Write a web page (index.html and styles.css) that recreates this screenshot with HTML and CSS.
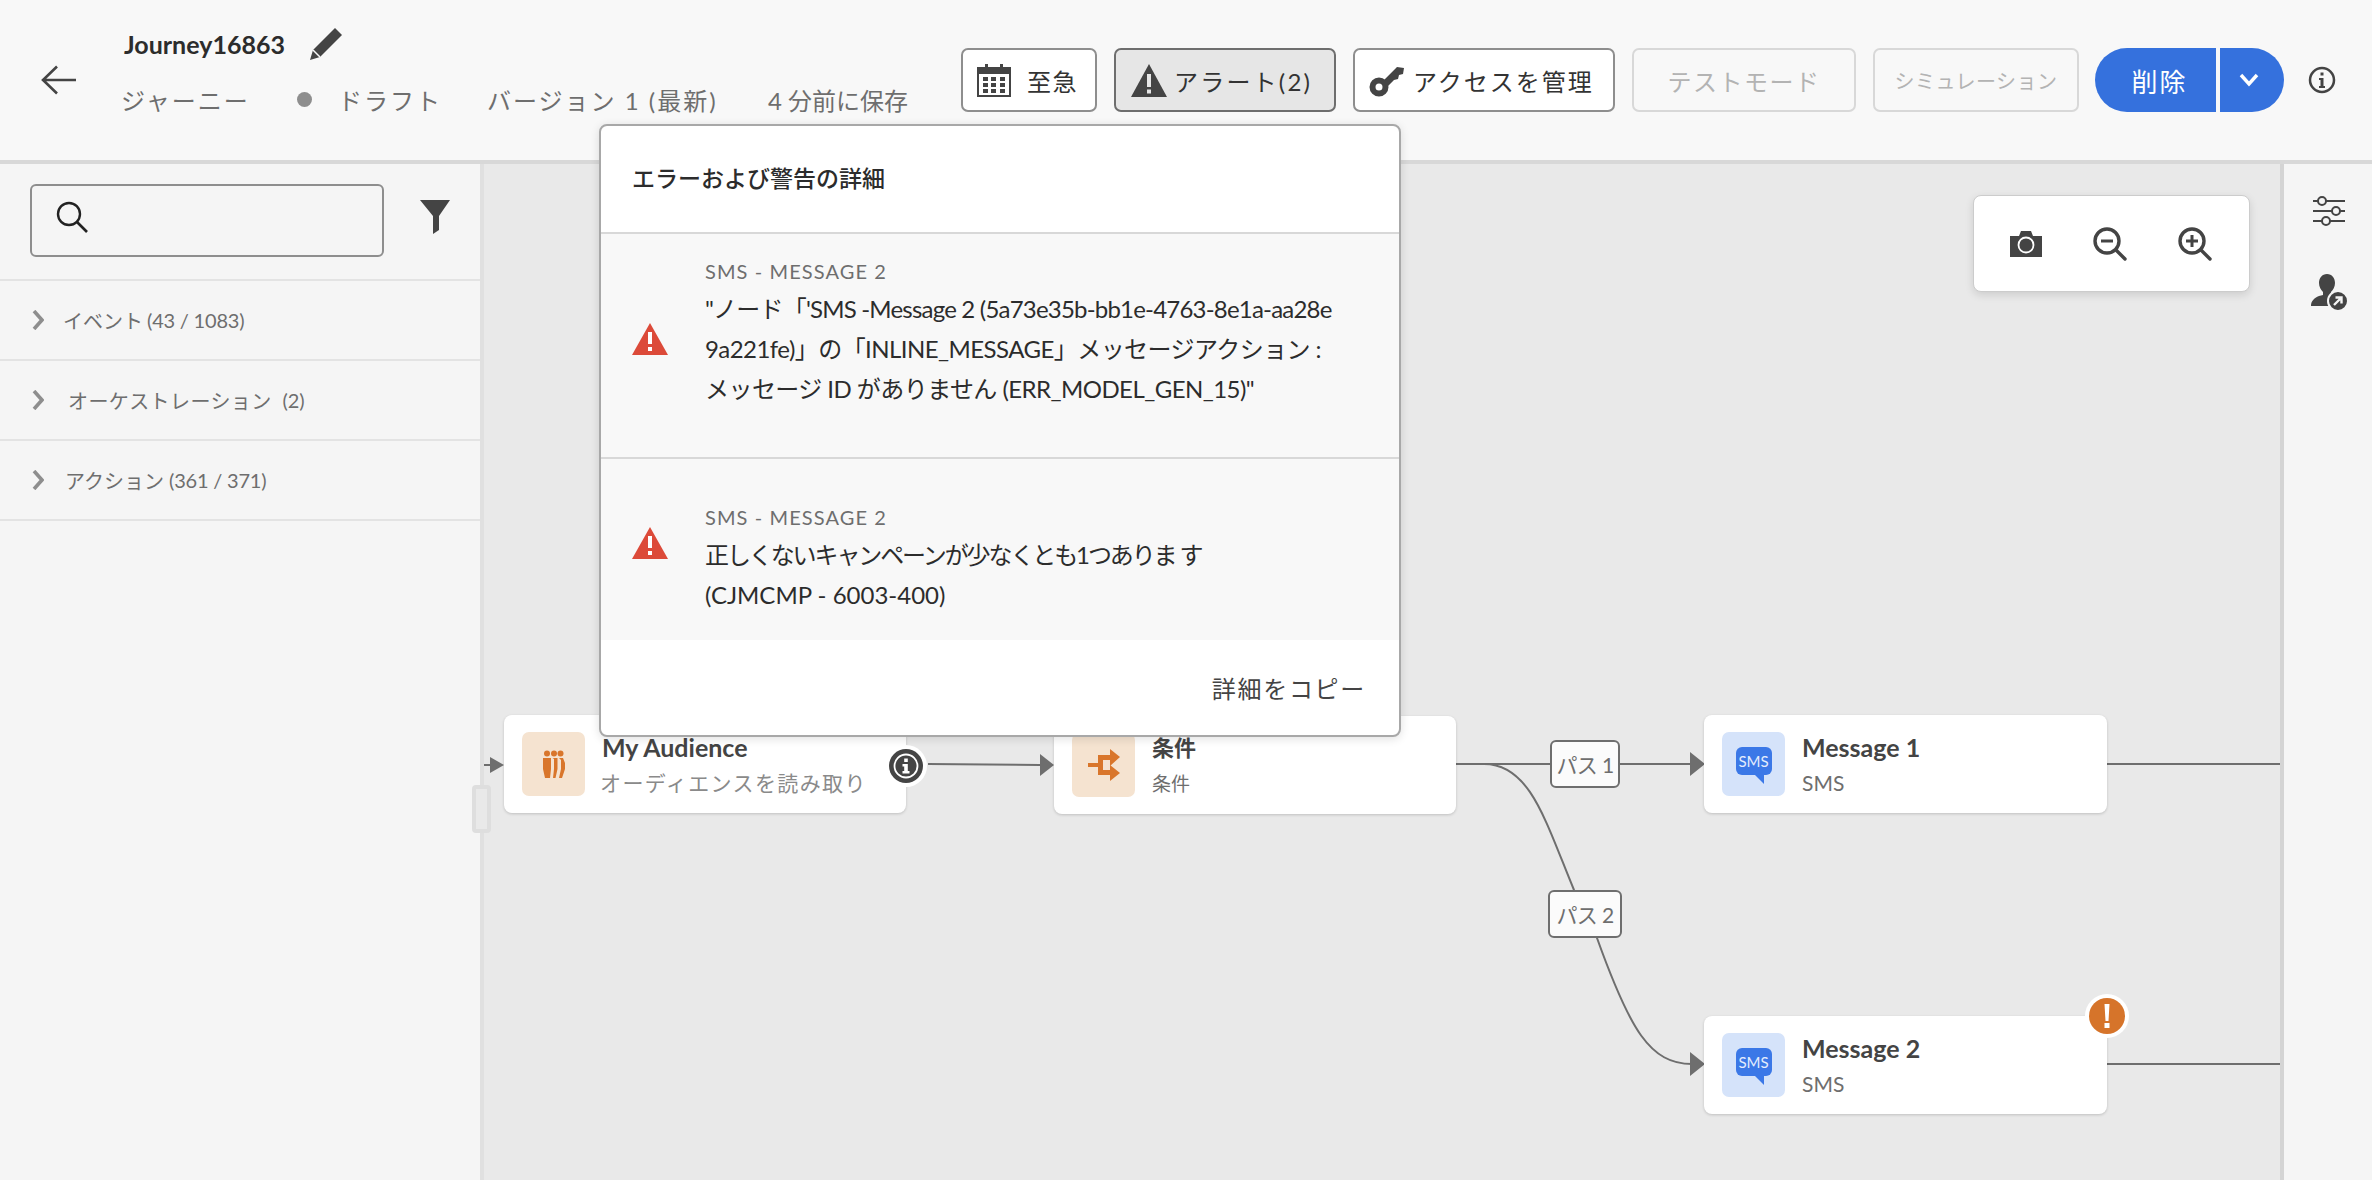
FILE: index.html
```html
<!DOCTYPE html>
<html lang="ja">
<head>
    <meta charset="UTF-8">
    <title>Journey16863</title>
    <link rel="stylesheet" href="styles.css">
</head>
<body>

<header class="topbar">
    <button class="back-button" aria-label="戻る">
        <svg width="36" height="30" viewBox="0 0 36 30"><path d="M35 15H3M16 1.500L2 15l14 13.500" fill="none" stroke="#444" stroke-width="2.600"/></svg>
    </button>
    <div class="journey-info">
        <div class="journey-title">
            <span>Journey16863</span>
            <svg width="34" height="34" viewBox="0 0 34 34"><path d="M26 1l7 7L11 30 1 33l3-10z" fill="#444"/><path d="M4 23l7 7" stroke="#f8f8f8" stroke-width="1.500"/></svg>
        </div>
        <div class="journey-meta">
            <span class="meta-type">ジャーニー</span>
            <span class="status-dot"></span>
            <span class="meta-status">ドラフト</span>
            <span class="meta-version">バージョン 1 (最新)</span>
            <span class="meta-saved">4 分前に保存</span>
        </div>
    </div>
    <div class="actions">
        <button class="btn btn-urgent">
            <svg width="34" height="34" viewBox="0 0 34 34"><path d="M1 5h32v28H1z" fill="#fff" stroke="#444" stroke-width="2"/><path d="M1 5h32v6H1zM8 1h3v6H8zM23 1h3v6h-3z" fill="#444"/><path d="M6 14h5v4H6zM14 14h5v4h-5zM23 14h5v4h-5zM6 20h5v4H6zM14 20h5v4h-5zM23 20h5v4h-5zM6 26h5v4H6zM14 26h5v4h-5zM23 26h5v4h-5z" fill="#444"/></svg>
            <span>至急</span>
        </button>
        <button class="btn btn-alert">
            <svg width="38" height="34" viewBox="0 0 38 34"><path d="M19 1l18 33H1z" fill="#444"/><path d="M17 11h4v13h-4zM17 26.500h4v4h-4z" fill="#e6e6e6"/></svg>
            <span>アラート(2)</span>
        </button>
        <button class="btn btn-access">
            <svg width="36" height="34" viewBox="0 0 36 34"><circle cx="10" cy="24" r="6.500" fill="none" stroke="#444" stroke-width="6"/><path d="M14 18L28 4l7 1-1 6-4 1-1 4-4 1-6 6z" fill="#444"/></svg>
            <span>アクセスを管理</span>
        </button>
        <button class="btn btn-disabled btn-test">テストモード</button>
        <button class="btn btn-disabled btn-sim">シミュレーション</button>
        <div class="split-button">
            <button class="split-main">削除</button>
            <button class="split-more" aria-label="その他">
                <svg width="20" height="14" viewBox="0 0 20 14"><path d="M2 2l8 9 8-9" fill="none" stroke="#fff" stroke-width="3.400"/></svg>
            </button>
        </div>
        <svg class="info-icon" width="28" height="28" viewBox="0 0 28 28"><circle cx="14" cy="14" r="12" fill="none" stroke="#444" stroke-width="2.500"/><path d="M12.500 6.500h3v3h-3zM11 12h4.500v8H17v2h-6v-2h1.500v-6H11z" fill="#444"/></svg>
    </div>
</header>

<main class="workspace">
    <aside class="sidebar">
        <div class="search-row">
            <div class="search-box">
                <svg width="32" height="32" viewBox="0 0 32 32"><circle cx="13" cy="13" r="11" fill="none" stroke="#222" stroke-width="2.400"/><path d="M21 21l10 10" stroke="#222" stroke-width="2.600"/></svg>
            </div>
            <svg class="filter-icon" width="30" height="34" viewBox="0 0 30 34"><path d="M0 0h30L19 16v14l-6 4V16z" fill="#444"/></svg>
        </div>
        <div class="category">
            <svg width="12" height="20" viewBox="0 0 12 20"><path d="M2 1l8 9-8 9" fill="none" stroke="#8e8e8e" stroke-width="3.600"/></svg>
            <span class="cat-events">イベント</span><span class="cat-count count-events">(43 / 1083)</span>
        </div>
        <div class="category">
            <svg width="12" height="20" viewBox="0 0 12 20"><path d="M2 1l8 9-8 9" fill="none" stroke="#8e8e8e" stroke-width="3.600"/></svg>
            <span class="cat-orch">オーケストレーション</span><span class="cat-count count-orch">(2)</span>
        </div>
        <div class="category">
            <svg width="12" height="20" viewBox="0 0 12 20"><path d="M2 1l8 9-8 9" fill="none" stroke="#8e8e8e" stroke-width="3.600"/></svg>
            <span class="cat-actions">アクション</span><span class="cat-count count-actions">(361 / 371)</span>
        </div>
    </aside>

    <section class="canvas">
        <!-- connectors use page coordinates through the viewBox -->
        <svg class="links" viewBox="484 164 1796 1016">
            <path d="M484 765h8" stroke="#6e6e6e" stroke-width="2" fill="none"/>
            <path d="M490 757l14 8-14 8z" fill="#6e6e6e"/>
            <path d="M928 764l112 1" stroke="#6e6e6e" stroke-width="2" fill="none"/>
            <path d="M1040 754l14 11-14 11z" fill="#6e6e6e"/>
            <path d="M1456 764h235" stroke="#6e6e6e" stroke-width="2" fill="none"/>
            <path d="M1690 752l15 12-15 12z" fill="#6e6e6e"/>
            <path d="M2106 764h175M2106 1064h175" stroke="#6e6e6e" stroke-width="2" fill="none"/>
            <path d="M1484 764C1530 764 1545 820 1574 890L1597 938C1630 1030 1650 1064 1692 1064" stroke="#6e6e6e" stroke-width="2" fill="none"/>
            <path d="M1690 1052l15 12-15 12z" fill="#6e6e6e"/>
        </svg>

        <div class="resize-handle"></div>

        <div class="zoom-tools">
            <svg width="32" height="26" viewBox="0 0 32 26"><path d="M0 5h9l2-5h10l2 5h9v21H0z" fill="#444"/><circle cx="16" cy="14" r="7.500" fill="#444" stroke="#fff" stroke-width="1.800"/></svg>
            <svg width="34" height="34" viewBox="0 0 34 34"><circle cx="14" cy="14" r="12" fill="none" stroke="#444" stroke-width="3.400"/><path d="M8 12.500h12v3H8z" fill="#444"/><path d="M23 23l9 9" stroke="#444" stroke-width="3.400" stroke-linecap="round"/></svg>
            <svg width="34" height="34" viewBox="0 0 34 34"><circle cx="14" cy="14" r="12" fill="none" stroke="#444" stroke-width="3.400"/><path d="M8 12.500h4.500V8h3v4.500H20v3h-4.500V20h-3v-4.500H8z" fill="#444"/><path d="M23 23l9 9" stroke="#444" stroke-width="3.400" stroke-linecap="round"/></svg>
        </div>

        <div class="node node-audience">
            <div class="node-tile tile-orange">
                <svg width="24" height="28" viewBox="0 0 24 28"><circle cx="5" cy="3.500" r="3" fill="#d9762b"/><circle cx="12" cy="3.500" r="3" fill="#d9762b"/><circle cx="18.500" cy="3.500" r="3" fill="#d9762b"/><path d="M1 8h8v11l-1 9H3L1 19zM10.500 8h3l2 0v11l-2 9H11l1-9V9zM17 8h4l2 5v6l-3 9h-3l2-9V10z" fill="#d9762b"/></svg>
            </div>
            <div class="node-text">
                <div class="node-title">My Audience</div>
                <div class="node-sub sub-ja">オーディエンスを読み取り</div>
            </div>
            <span class="badge-info">
                <svg width="34" height="34" viewBox="0 0 34 34"><circle cx="17" cy="17" r="17" fill="#444"/><circle cx="17" cy="17" r="11.500" fill="#444" stroke="#fff" stroke-width="1.800"/><path d="M15.200 9.500h3.600v3.400h-3.600zM13.500 15h5.300v7h1.700v2.500h-7V22h1.700v-4.500h-1.700z" fill="#fff"/></svg>
            </span>
        </div>

        <div class="node node-condition">
            <div class="node-tile tile-orange">
                <svg width="32" height="32" viewBox="0 0 32 32"><path d="M0 14h10V6h12V0l10 8-10 9v-6h-7v10h7v-5l10 8-10 8v-6H10V18H0z" fill="#d9762b"/></svg>
            </div>
            <div class="node-text">
                <div class="node-title title-ja">条件</div>
                <div class="node-sub sub-cond">条件</div>
            </div>
        </div>

        <div class="path-label path-one">パス 1</div>
        <div class="path-label path-two">パス 2</div>

        <div class="node node-msg-one">
            <div class="node-tile tile-blue">
                <div class="sms-bubble">SMS</div>
            </div>
            <div class="node-text">
                <div class="node-title">Message 1</div>
                <div class="node-sub">SMS</div>
            </div>
        </div>

        <div class="node node-msg-two">
            <div class="node-tile tile-blue">
                <div class="sms-bubble">SMS</div>
            </div>
            <div class="node-text">
                <div class="node-title">Message 2</div>
                <div class="node-sub">SMS</div>
            </div>
            <span class="badge-warning">
                <svg width="36" height="36" viewBox="0 0 36 36"><circle cx="18" cy="18" r="18" fill="#d6742a"/><path d="M15.500 6h5l-1 17h-3zM15.500 25h5v5h-5z" fill="#fff"/></svg>
            </span>
        </div>
    </section>

    <aside class="right-rail">
        <svg width="32" height="30" viewBox="0 0 32 30"><path d="M0 5h32M0 15h32M0 25h32" stroke="#444" stroke-width="2"/><circle cx="9" cy="5" r="4" fill="#f5f5f5" stroke="#444" stroke-width="2"/><circle cx="23" cy="15" r="4" fill="#f5f5f5" stroke="#444" stroke-width="2"/><circle cx="13" cy="25" r="4" fill="#f5f5f5" stroke="#444" stroke-width="2"/></svg>
        <svg width="36" height="36" viewBox="0 0 36 36"><path d="M16 0c5 0 8 4 8 9 0 4-2 7-4 9v3l5 2-3 9H0c0-5 3-8 8-10l4-1v-3c-2-2-4-5-4-9 0-5 3-9 8-9z" fill="#444"/><circle cx="27" cy="27" r="10" fill="#444" stroke="#f5f5f5" stroke-width="2"/><path d="M23 31l7-7M24.500 23.500h6v6" fill="none" stroke="#f5f5f5" stroke-width="2.400"/></svg>
    </aside>
</main>

<div class="alert-popover">
    <div class="popover-head">エラーおよび警告の詳細</div>
    <div class="alert-item item-one">
        <svg class="warn-icon" width="36" height="32" viewBox="0 0 36 32"><path d="M18 0l18 32H0z" fill="#dc4a39"/><path d="M16 9h4v12h-4zM16 24h4v4h-4z" fill="#fff"/></svg>
        <div class="alert-body">
            <div class="alert-label">SMS - MESSAGE 2</div>
            <div class="alert-line line-tight">"ノード「'SMS -Message 2 (5a73e35b-bb1e-4763-8e1a-aa28e</div>
            <div class="alert-line line-snug">9a221fe)」の「INLINE_MESSAGE」メッセージアクション :</div>
            <div class="alert-line line-snug">メッセージ ID がありません (ERR_MODEL_GEN_15)"</div>
        </div>
    </div>
    <div class="alert-item item-two">
        <svg class="warn-icon" width="36" height="32" viewBox="0 0 36 32"><path d="M18 0l18 32H0z" fill="#dc4a39"/><path d="M16 9h4v12h-4zM16 24h4v4h-4z" fill="#fff"/></svg>
        <div class="alert-body">
            <div class="alert-label">SMS - MESSAGE 2</div>
            <div class="alert-line line-kana">正しくないキャンペーンが少なくとも1つありま す</div>
            <div class="alert-line">(CJMCMP - 6003-400)</div>
        </div>
    </div>
    <div class="popover-foot">詳細をコピー</div>
</div>

</body>
</html>
```

FILE: styles.css
```css
* {
    box-sizing: border-box;
}
html, body {
    margin: 0;
    height: 100%;
    overflow: hidden;
}
body {
    position: relative;
    font-family: "Lato", "Noto Sans CJK JP", sans-serif;
    background-color: #f5f5f5;
    color: #444;
}
button {
    font-family: inherit;
    cursor: pointer;
}
svg {
    display: block;
    flex: none;
}

/* top bar */
.topbar {
    display: flex;
    height: 164px;
    padding-left: 41px;
    background-color: #f8f8f8;
    border-bottom: 4px solid #d8d8d8;
}
.back-button {
    align-self: flex-start;
    margin-top: 65px;
    width: 83px;
    padding: 0;
    background: none;
    border: none;
}
.journey-title {
    display: flex;
    align-items: center;
    gap: 24px;
    height: 34px;
    margin-top: 27px;
    font-size: 25px;
    font-weight: 700;
    color: #2c2c2c;
}
.journey-meta {
    display: flex;
    align-items: center;
    height: 34px;
    margin-top: 21px;
    margin-left: -3px;
    font-size: 24px;
    letter-spacing: 2px;
    color: #6e6e6e;
}
.meta-type {
    width: 176px;
}
.status-dot {
    width: 15px;
    height: 15px;
    margin-right: 26px;
    border-radius: 50%;
    background-color: #8e8e8e;
}
.meta-status {
    width: 149px;
}
.meta-version {
    width: 281px;
}
.meta-saved {
    letter-spacing: 0;
}

.actions {
    display: flex;
    align-items: center;
    gap: 17px;
    height: 64px;
    margin: 48px 36px 0 auto;
}
.btn {
    display: flex;
    align-items: center;
    justify-content: center;
    height: 64px;
    padding: 0;
    background-color: #fff;
    border: 2px solid #8e8e8e;
    border-radius: 7px;
    font-size: 24px;
    letter-spacing: 1.500px;
    color: #333;
}
.btn-urgent {
    justify-content: flex-start;
    gap: 16px;
    width: 136px;
    padding-left: 14px;
}
.btn-alert {
    justify-content: flex-start;
    gap: 6px;
    width: 222px;
    padding-left: 14px;
    background-color: #e6e6e6;
    border-color: #6e6e6e;
    letter-spacing: 2.200px;
}
.btn-access {
    justify-content: flex-start;
    gap: 8px;
    width: 262px;
    padding-left: 14px;
    letter-spacing: 2px;
}
.btn-disabled {
    background-color: #f8f8f8;
    border-color: #d8d8d8;
    color: #b3b3b3;
}
.btn-test {
    width: 224px;
}
.btn-sim {
    width: 206px;
    font-size: 20px;
    letter-spacing: 0.500px;
}
.split-button {
    display: flex;
    gap: 4px;
    margin-left: -1px;
}
.split-main,
.split-more {
    height: 64px;
    padding: 0;
    border: none;
    background-color: #3571dd;
    color: #fff;
}
.split-main {
    width: 121px;
    padding-left: 8px;
    border-radius: 32px 0 0 32px;
    font-size: 26px;
    letter-spacing: 2px;
}
.split-more {
    display: flex;
    align-items: center;
    justify-content: center;
    width: 64px;
    padding-right: 6px;
    border-radius: 0 32px 32px 0;
}
.info-icon {
    margin-left: 7px;
}

/* body columns */
.workspace {
    display: flex;
    height: 1016px;
}
.sidebar {
    width: 484px;
    background-color: #f5f5f5;
    border-right: 4px solid #e0e0e0;
}
.search-row {
    display: flex;
    align-items: flex-start;
    gap: 36px;
    height: 117px;
    padding: 20px 0 0 30px;
    border-bottom: 2px solid #e3e3e3;
}
.search-box {
    width: 354px;
    height: 73px;
    padding: 15px 0 0 24px;
    border: 2px solid #8e8e8e;
    border-radius: 6px;
}
.filter-icon {
    margin-top: 16px;
}
.category {
    display: flex;
    align-items: center;
    height: 80px;
    padding-left: 32px;
    border-bottom: 2px solid #e3e3e3;
    font-size: 20px;
    color: #6e6e6e;
}
.cat-count {
    letter-spacing: -0.200px;
}
.cat-events {
    margin-left: 19px;
}
.cat-orch {
    margin-left: 24px;
    letter-spacing: 0.400px;
}
.cat-actions {
    margin-left: 21px;
}
.count-events {
    margin-left: 4px;
}
.count-orch {
    margin-left: 11px;
}
.count-actions {
    margin-left: 5px;
}

/* canvas, its items sit at free positions */
.canvas {
    position: relative;
    flex: 1;
    background-color: #e9e9e9;
}
.links {
    position: absolute;
    left: 0;
    top: 0;
    width: 1796px;
    height: 1016px;
}
.resize-handle {
    position: absolute;
    left: -12px;
    top: 621px;
    width: 19px;
    height: 48px;
    background-color: #e9e9e9;
    border: 4px solid #dedede;
    border-radius: 4px;
}
.zoom-tools {
    position: absolute;
    left: 1489px;
    top: 31px;
    display: flex;
    align-items: center;
    justify-content: space-between;
    width: 277px;
    height: 97px;
    padding: 0 37px 0 36px;
    background-color: #fff;
    border: 1px solid #ccc;
    border-radius: 8px;
    box-shadow: 0 3px 8px rgba(0, 0, 0, 0.12);
}
.node {
    position: absolute;
    display: flex;
    align-items: center;
    gap: 17px;
    width: 402px;
    height: 98px;
    padding-left: 18px;
    background-color: #fff;
    border-radius: 8px;
    box-shadow: 0 1px 3px rgba(0, 0, 0, 0.18);
}
.node-audience {
    left: 20px;
    top: 551px;
}
.node-condition {
    left: 570px;
    top: 552px;
}
.node-msg-one {
    left: 1220px;
    top: 551px;
    width: 403px;
}
.node-msg-two {
    left: 1220px;
    top: 852px;
    width: 403px;
}
.node-tile {
    display: flex;
    align-items: center;
    justify-content: center;
    width: 63px;
    height: 64px;
    border-radius: 7px;
}
.tile-orange {
    background-color: #f5e3d0;
}
.tile-blue {
    background-color: #d5e3fa;
}
.sms-bubble {
    position: relative;
    width: 36px;
    height: 28px;
    margin-top: -6px;
    background-color: #3b78e7;
    border-radius: 6px;
    font-size: 15px;
    line-height: 28px;
    text-align: center;
    color: #e4edfd;
}
.sms-bubble::after {
    content: "";
    position: absolute;
    right: 8px;
    bottom: -9px;
    border-top: 10px solid #3b78e7;
    border-left: 10px solid transparent;
}
.node-title {
    font-size: 25px;
    font-weight: 700;
    line-height: 32px;
    color: #444;
}
.title-ja {
    font-size: 22px;
}
.node-sub {
    margin-top: 6px;
    font-size: 21px;
    line-height: 28px;
    color: #6e6e6e;
}
.sub-ja {
    margin-left: -2px;
    letter-spacing: 1.400px;
    color: #8a8a8a;
}
.sub-cond {
    font-size: 19px;
}
.badge-info,
.badge-warning {
    position: absolute;
    display: flex;
    align-items: center;
    justify-content: center;
    background-color: #fff;
    border-radius: 50%;
}
.badge-info {
    right: -21px;
    top: 30px;
    width: 42px;
    height: 42px;
}
.badge-warning {
    right: -22px;
    top: -22px;
    width: 44px;
    height: 44px;
}
.path-label {
    position: absolute;
    display: flex;
    align-items: center;
    justify-content: center;
    height: 48px;
    background-color: #fbfbfb;
    border: 2px solid #6e6e6e;
    border-radius: 6px;
    font-size: 21px;
    letter-spacing: -0.600px;
    color: #6e6e6e;
}
.path-one {
    left: 1066px;
    top: 576px;
    width: 70px;
}
.path-two {
    left: 1064px;
    top: 726px;
    width: 74px;
}

.right-rail {
    display: flex;
    flex-direction: column;
    align-items: center;
    gap: 48px;
    width: 92px;
    padding: 32px 0 0 2px;
    background-color: #f5f5f5;
    border-left: 4px solid #d4d4d4;
}

/* alert popover */
.alert-popover {
    position: absolute;
    left: 599px;
    top: 124px;
    width: 802px;
    height: 613px;
    background-color: #fff;
    border: 2px solid #a8a8a8;
    border-radius: 8px;
    box-shadow: 0 2px 10px rgba(0, 0, 0, 0.12);
    overflow: hidden;
}
.popover-head {
    display: flex;
    align-items: center;
    height: 108px;
    padding: 0 0 4px 31px;
    font-size: 23px;
    font-weight: 500;
    color: #2c2c2c;
    border-bottom: 2px solid #d8d8d8;
}
.alert-item {
    display: flex;
    align-items: flex-start;
    padding-left: 31px;
    background-color: #f8f8f8;
}
.item-one {
    height: 225px;
    padding-top: 22px;
    border-bottom: 2px solid #d8d8d8;
}
.item-two {
    height: 181px;
    padding-top: 43px;
}
.warn-icon {
    margin-top: 67px;
}
.item-two .warn-icon {
    margin-top: 25px;
}
.alert-body {
    margin-left: 37px;
}
.alert-label {
    height: 33px;
    font-size: 20px;
    line-height: 30px;
    letter-spacing: 1.100px;
    color: #6e6e6e;
}
.alert-line {
    height: 40px;
    font-size: 24px;
    line-height: 40px;
    color: #2c2c2c;
    white-space: nowrap;
}
.line-tight {
    letter-spacing: -0.800px;
}
.line-snug {
    letter-spacing: -0.550px;
}
.line-kana {
    letter-spacing: -2.100px;
}
.popover-foot {
    height: 95px;
    padding: 33px 33px 0 0;
    text-align: right;
    font-size: 24px;
    line-height: 32px;
    letter-spacing: 1.700px;
    color: #444;
}
```
